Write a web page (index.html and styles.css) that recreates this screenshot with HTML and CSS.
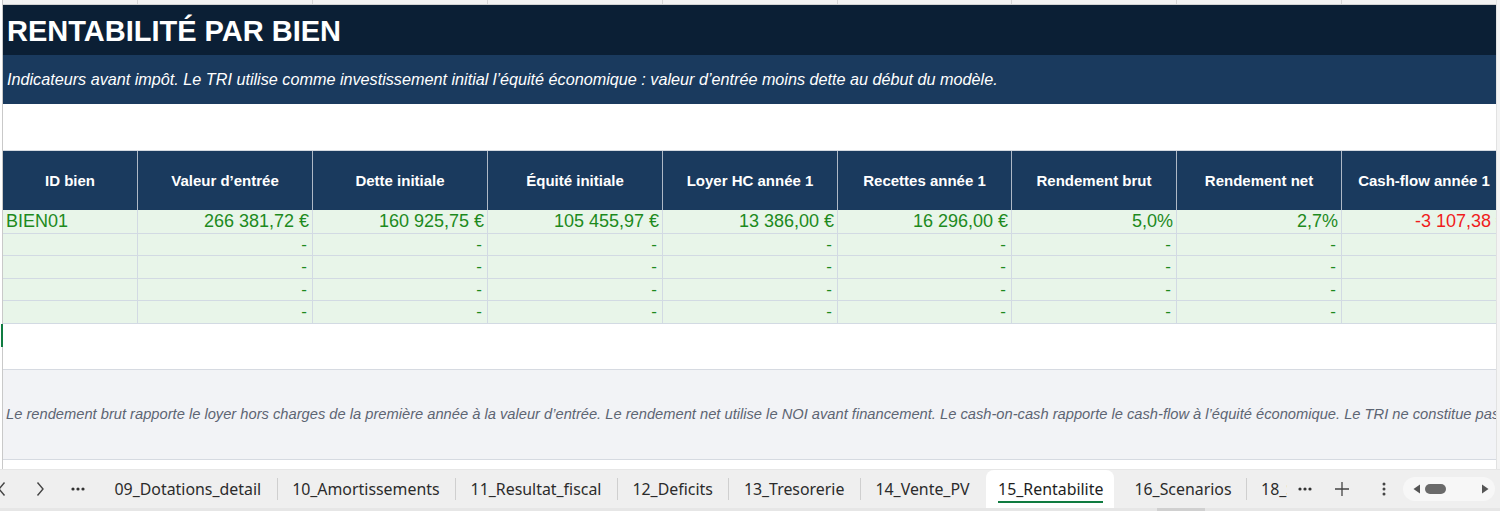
FILE: index.html
```html
<!DOCTYPE html>
<html lang="fr">
<head>
<meta charset="utf-8">
<title>15_Rentabilite</title>
<link rel="stylesheet" href="styles.css">
</head>
<body>
<div class="app">
  <div class="grid-area">
    <div class="gutter"><div class="sel-mark"></div></div>
    <div class="content">
      <div class="strip cols">
        <div></div><div></div><div></div><div></div><div></div><div></div><div></div><div></div><div></div>
      </div>
      <div class="title">RENTABILITÉ PAR BIEN</div>
      <div class="subtitle">Indicateurs avant impôt. Le TRI utilise comme investissement initial l’équité économique : valeur d’entrée moins dette au début du modèle.</div>
      <div class="blank b46"></div>
      <div class="cols head">
        <div>ID bien</div><div>Valeur d’entrée</div><div>Dette initiale</div><div>Équité initiale</div><div>Loyer HC année 1</div><div>Recettes année 1</div><div>Rendement brut</div><div>Rendement net</div><div>Cash-flow année 1</div>
      </div>
      <div class="cols data r24">
        <div class="id">BIEN01</div><div>266 381,72 €</div><div>160 925,75 €</div><div>105 455,97 €</div><div>13 386,00 €</div><div>16 296,00 €</div><div>5,0%</div><div>2,7%</div><div class="neg">-3 107,38 €</div>
      </div>
      <div class="cols data dash r22">
        <div class="id"></div><div>-</div><div>-</div><div>-</div><div>-</div><div>-</div><div>-</div><div>-</div><div></div>
      </div>
      <div class="cols data dash r23">
        <div class="id"></div><div>-</div><div>-</div><div>-</div><div>-</div><div>-</div><div>-</div><div>-</div><div></div>
      </div>
      <div class="cols data dash r22">
        <div class="id"></div><div>-</div><div>-</div><div>-</div><div>-</div><div>-</div><div>-</div><div>-</div><div></div>
      </div>
      <div class="cols data dash r23">
        <div class="id"></div><div>-</div><div>-</div><div>-</div><div>-</div><div>-</div><div>-</div><div>-</div><div></div>
      </div>
      <div class="blank b45"></div>
      <div class="notes">Le rendement brut rapporte le loyer hors charges de la première année à la valeur d’entrée. Le rendement net utilise le NOI avant financement. Le cash-on-cash rapporte le cash-flow à l’équité économique. Le TRI ne constitue pas une garantie de performance future.</div>
    </div>
    <div class="vscroll"></div>
  </div>
  <div class="tabbar">
    <div class="nav prev">
      <svg width="8" height="16" viewBox="0 0 8 16"><path d="M6.5 1.5L1 8l5.5 6.5" stroke="#444" stroke-width="1.4" fill="none"/></svg>
    </div>
    <div class="nav next">
      <svg width="8" height="16" viewBox="0 0 8 16"><path d="M1.5 1.5L7 8l-5.5 6.5" stroke="#444" stroke-width="1.4" fill="none"/></svg>
    </div>
    <div class="nav more">
      <svg width="14" height="4" viewBox="0 0 14 4"><circle cx="2" cy="2" r="1.6" fill="#333"/><circle cx="7" cy="2" r="1.6" fill="#333"/><circle cx="12" cy="2" r="1.6" fill="#333"/></svg>
    </div>
    <div class="tab first">09_Dotations_detail</div>
    <div class="tab sep">10_Amortissements</div>
    <div class="tab sep">11_Resultat_fiscal</div>
    <div class="tab sep">12_Deficits</div>
    <div class="tab sep">13_Tresorerie</div>
    <div class="tab sep">14_Vente_PV</div>
    <div class="tab active"><span>15_Rentabilite</span></div>
    <div class="tab after">16_Scenarios</div>
    <div class="tab sep cut"><span>18_Synthese</span></div>
    <div class="nav more2">
      <svg width="14" height="4" viewBox="0 0 14 4"><circle cx="2" cy="2" r="1.6" fill="#333"/><circle cx="7" cy="2" r="1.6" fill="#333"/><circle cx="12" cy="2" r="1.6" fill="#333"/></svg>
    </div>
    <div class="nav plus">
      <svg width="16" height="16" viewBox="0 0 16 16"><path d="M8 1v14M1 8h14" stroke="#444" stroke-width="1.3" fill="none"/></svg>
    </div>
    <div class="nav kebab">
      <svg width="4" height="16" viewBox="0 0 4 16"><circle cx="2" cy="3" r="1.5" fill="#444"/><circle cx="2" cy="8" r="1.5" fill="#444"/><circle cx="2" cy="13" r="1.5" fill="#444"/></svg>
    </div>
    <div class="hscroll">
      <svg width="8" height="10" viewBox="0 0 8 10"><path d="M7 0.5v9L0.5 5z" fill="#555"/></svg>
      <div class="thumb"></div>
      <div class="spacer"></div>
      <svg width="8" height="10" viewBox="0 0 8 10"><path d="M1 0.5v9L7.5 5z" fill="#555"/></svg>
    </div>
  </div>
  <div class="bottom-strip"><div class="bthumb"></div></div>
</div>
</body>
</html>
```
FILE: styles.css
```css
html, body {
  margin: 0;
  padding: 0;
  background: #ffffff;
}
.app {
  width: 1500px;
  height: 511px;
  overflow: hidden;
  font-family: "Liberation Sans", Arial, sans-serif;
}
.grid-area {
  display: flex;
  height: 469px;
  background: #ffffff;
}
.gutter {
  position: relative;
  width: 2px;
  border-right: 1px solid #c9c9c9;
  flex: none;
}
.sel-mark {
  position: absolute;
  left: 1px;
  top: 324px;
  width: 2px;
  height: 23px;
  background: #107c41;
}
.content {
  width: 1493px;
  flex: none;
  overflow: hidden;
}
.vscroll {
  flex: 1;
  background: #f4f4f4;
  border-left: 1px solid #e2e2e2;
}
.cols {
  display: grid;
  grid-template-columns: 135px 175px 175px 175px 175px 174px 165px 165px 165px;
  width: 1504px;
}
.cols > div {
  box-sizing: border-box;
}
.strip {
  height: 5px;
  background: #f2f2f2;
  border-bottom: 1px solid #d2d2d2;
  box-sizing: border-box;
}
.strip > div {
  border-right: 1px solid #d6d6d6;
}
.title {
  height: 50px;
  background: #0b1f35;
  color: #ffffff;
  font-weight: bold;
  font-size: 29px;
  line-height: 50px;
  padding-left: 4px;
  white-space: nowrap;
  box-sizing: border-box;
  padding-top: 1px;
}
.subtitle {
  height: 49px;
  background: #1a3a5e;
  color: #ffffff;
  font-style: italic;
  font-size: 16.2px;
  line-height: 48px;
  padding-left: 4px;
  white-space: nowrap;
}
.blank { background: #ffffff; }
.b46 { height: 46px; }
.b45 { height: 45px; }
.head {
  height: 60px;
  background: #1a3a5e;
  border-top: 1px solid #d4d9e0;
  box-sizing: border-box;
}
.head > div {
  color: #ffffff;
  font-weight: bold;
  font-size: 15px;
  display: flex;
  align-items: center;
  justify-content: center;
  border-right: 1px solid #aeb8c6;
  white-space: nowrap;
  padding-bottom: 1px;
}
.data {
  background: #e8f5e9;
  box-sizing: border-box;
}
.data > div {
  border-right: 1px solid #d2dae3;
  border-bottom: 1px solid #d2dae3;
  color: #1d8a1d;
  font-size: 18px;
  padding-right: 3px;
  display: flex;
  align-items: center;
  justify-content: flex-end;
  white-space: nowrap;
  overflow: hidden;
}
.data > div.id {
  justify-content: flex-start;
  padding-left: 3px;
}
.data > div.neg {
  color: #f01c1c;
  justify-content: flex-start;
  padding-left: 73px;
}
.dash > div {
  padding-right: 5px;
  font-size: 17px;
}
.r24 { height: 24px; }
.r22 { height: 22px; }
.r23 { height: 23px; }
.notes {
  height: 91px;
  background: #f2f3f6;
  border-top: 1px solid #d6dae1;
  border-bottom: 1px solid #d6dae1;
  box-sizing: border-box;
  color: #5d6573;
  font-style: italic;
  font-size: 14.7px;
  line-height: 88px;
  padding-left: 3px;
  white-space: nowrap;
}
.tabbar {
  height: 39px;
  background: #efefef;
  border-top: 1px solid #e6e6e6;
  box-sizing: border-box;
  display: flex;
  align-items: stretch;
  font-family: "Noto Sans", "Open Sans", sans-serif;
  font-size: 15.9px;
  color: #2b2b2b;
}
.nav {
  display: flex;
  align-items: center;
  justify-content: center;
  flex: none;
}
.prev { width: 8px; margin-left: -2px; }
.next { width: 8px; margin-left: 30px; }
.more { width: 14px; margin-left: 27px; }
.tab {
  display: flex;
  align-items: center;
  padding: 0 15.5px;
  white-space: nowrap;
  position: relative;
  flex: none;
}
.tab.first { margin-left: 14px; }
.tab.sep::before {
  content: "";
  position: absolute;
  left: 0;
  top: 8px;
  bottom: 8px;
  border-left: 1px solid #cfcfcf;
}
.tab.active {
  background: #ffffff;
  border-radius: 8px 8px 0 0;
  padding: 0 11px 0 12px;
  margin-left: 1px;
}
.tab.active span {
  border-bottom: 2px solid #107c41;
  padding-bottom: 1px;
  margin-top: 2px;
  color: #1e1e1e;
}
.tab.after { padding-left: 20px; padding-right: 14px; }
.tab.cut {
  width: 26px;
  overflow: hidden;
  padding-right: 0;
}
.more2 { width: 14px; margin-left: 11px; }
.plus { width: 16px; margin-left: 22px; }
.kebab { width: 4px; margin-left: 32px; }
.hscroll {
  margin-left: 17px;
  margin-top: 7px;
  height: 24px;
  width: 92px;
  background: #f7f7f7;
  border-radius: 12px;
  display: flex;
  align-items: center;
  padding: 0 6px 0 10px;
  box-sizing: border-box;
  gap: 4px;
}
.thumb {
  width: 21px;
  height: 10px;
  background: #6a6a6a;
  border-radius: 5px;
}
.spacer { flex: 1; }
.bottom-strip {
  height: 3px;
  background: #e6e6e6;
  position: relative;
}
.bthumb {
  position: absolute;
  left: 1157px;
  top: 0;
  width: 48px;
  height: 3px;
  background: #d0d0d0;
}
```
